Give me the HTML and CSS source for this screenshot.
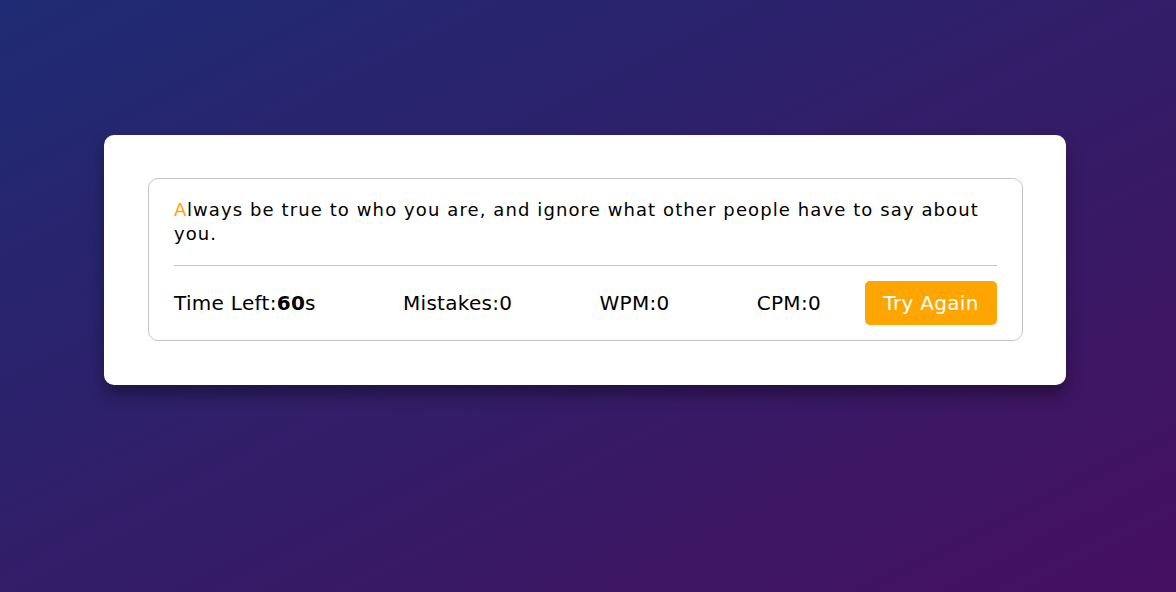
FILE: index.html
```html
<!DOCTYPE html>
<html>
<head>
<meta charset="utf-8">
<link rel="stylesheet" href="styles.css">
</head>
<body>
<div class="wrapper">
  <div class="content-box">
    <p class="typing-text"><span class="active">A</span>lways be true to who you are, and ignore what other people have to say about you.</p>
    <div class="content">
      <ul class="result-details">
        <li>Time Left:<b>60</b>s</li>
        <li>Mistakes:0</li>
        <li>WPM:0</li>
        <li>CPM:0</li>
      </ul>
      <button class="btn">Try Again</button>
    </div>
  </div>
</div>
</body>
</html>
```
FILE: styles.css
```css
* { box-sizing: border-box; margin: 0; padding: 0; }
html, body { height: 100%; }
body {
  font-family: "DejaVu Sans", Verdana, sans-serif;
  background: linear-gradient(to bottom right, #1e2b73, #46105f);
  padding: 135px 0 0 104px;
  color: #000;
}
.wrapper {
  width: 962px;
  padding: 43px 43px 44px 44px;
  background: #fff;
  border-radius: 10px;
  box-shadow: 0 10px 15px rgba(0, 0, 0, 0.35);
}
.content-box {
  border: 1px solid #c4c4c4;
  border-radius: 10px;
  padding: 19px 25px 15px;
}
.typing-text {
  font-size: 18px;
  line-height: 24px;
  letter-spacing: 1.1px;
  padding-bottom: 19px;
  border-bottom: 1px solid #c4c4c4;
}
.typing-text .active { color: #ffa500; letter-spacing: 0.6px; }
.content {
  display: flex;
  align-items: center;
  margin-top: 15px;
}
.result-details {
  list-style: none;
  display: flex;
  justify-content: space-between;
  flex: 1;
  margin-right: 44px;
  font-size: 20px;
  letter-spacing: 0.3px;
}
.result-details b { font-weight: bold; }
.btn {
  width: 132px;
  height: 44px;
  border: none;
  border-radius: 5px;
  background: #ffa500;
  color: #fff;
  font-family: "DejaVu Sans", Verdana, sans-serif;
  font-size: 20px;
  letter-spacing: 0.3px;
}
```
